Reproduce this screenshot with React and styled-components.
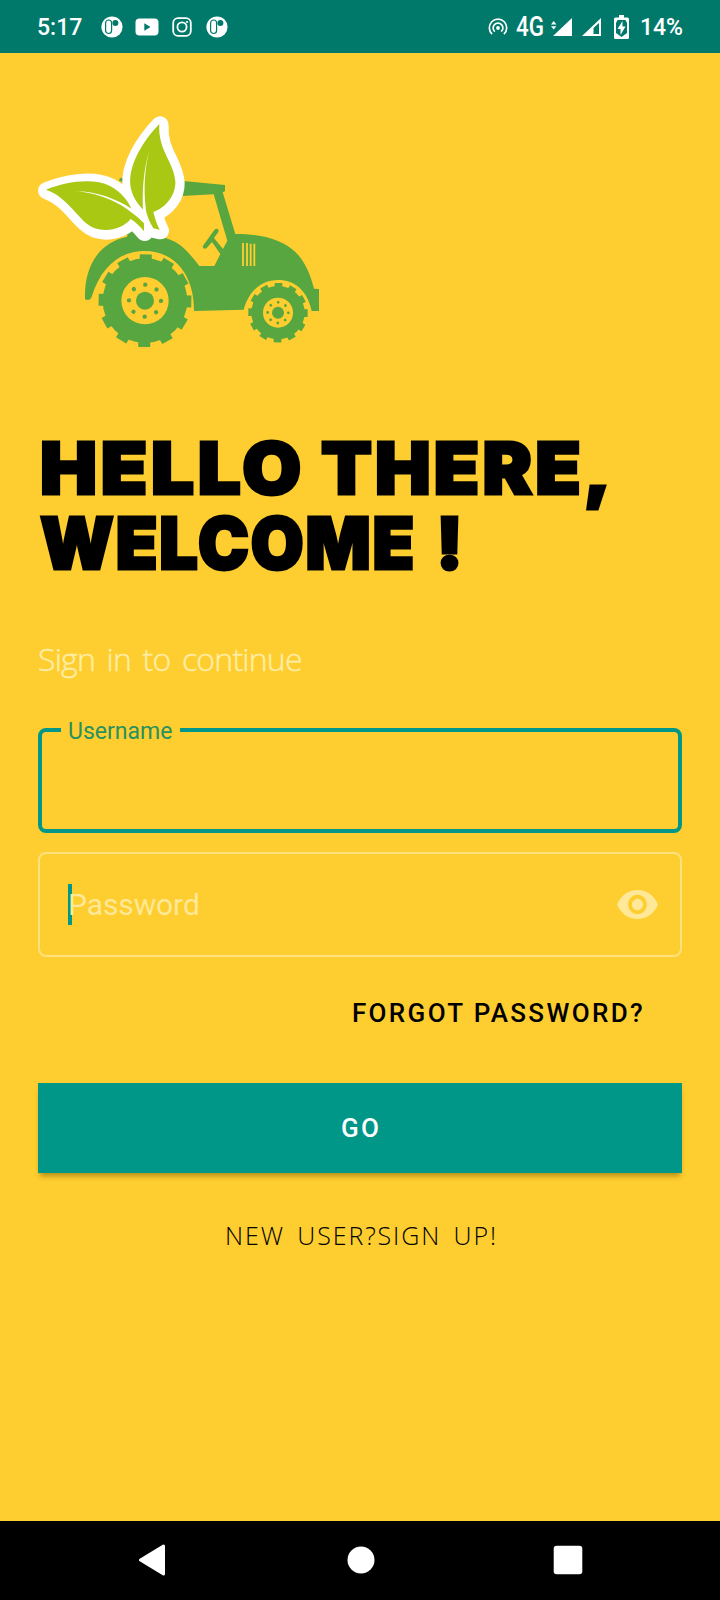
import React from 'react';
import styled, { createGlobalStyle } from 'styled-components';

const GlobalStyle = createGlobalStyle`
  * { box-sizing: border-box; }
  body { margin: 0; background: #fecd2f; font-family: Roboto, sans-serif; }
`;

const Screen = styled.div`
  width: 720px;
  height: 1600px;
  display: flex;
  flex-direction: column;
  background: #fecd2f;
  overflow: hidden;
`;

const StatusBar = styled.header`
  height: 53px;
  flex: none;
  display: flex;
  align-items: center;
  justify-content: space-between;
  padding: 0 37px;
  background: #00796b;
  color: #fff;
  font-size: 23px;
  font-weight: 500;
  line-height: 51px;
`;

const Clock = styled.span`
  width: 64px;
  padding-top: 2px;
`;

const Battery = styled.span`
  padding-top: 2px;
`;

const Network = styled.span`
  width: 35px;
  padding-top: 2px;
  font-size: 27px;
  font-weight: 500;
  span { display: inline-block; transform: scaleX(0.83); transform-origin: left; }
`;

const StatusGroup = styled.div`
  display: flex;
  align-items: center;
  svg { flex: none; display: block; }
`;

const Glyph = styled.svg`
  margin-right: ${(p) => p.$after || 0}px;
`;

const Main = styled.main`
  flex: 1;
  display: flex;
  flex-direction: column;
  padding: 62px 38px 0;
`;

const Logo = styled.svg`
  display: block;
  width: 281px;
  height: 232px;
  flex: none;
  overflow: visible;
`;

const Heading = styled.h1`
  margin: 84px 0 0;
  font-family: Inter, sans-serif;
  font-weight: 900;
  font-size: 71px;
  line-height: 75px;
  color: #000;
  -webkit-text-stroke: 3px #000;
`;

const Line = styled.div`
  display: flex;
  height: 75px;
  padding-left: 2px;
  white-space: nowrap;
`;

const Word = styled.span`
  width: ${(p) => p.$width}px;
  letter-spacing: ${(p) => p.$spacing}px;
  transform: scaleX(${(p) => p.$stretch || 1});
  transform-origin: left;
`;

const Subtitle = styled.p`
  margin: 54px 0 0;
  height: 48px;
  font-family: "Open Sans", sans-serif;
  font-weight: 300;
  font-size: 32px;
  line-height: 48px;
  letter-spacing: -0.8px;
  word-spacing: 4px;
  color: #ffeda8;
  -webkit-text-stroke: 0.4px #ffeda8;
  white-space: nowrap;
`;

const Field = styled.div`
  position: relative;
  height: 105px;
  margin-top: ${(p) => p.$top}px;
  border: ${(p) => (p.$focused ? '4px solid #009688' : '2px solid #ffe17d')};
  border-radius: 8px;
  display: flex;
  align-items: center;
  justify-content: space-between;
  padding: 0 22px 0 28px;
`;

const FloatingLabel = styled.label`
  position: absolute;
  left: 19px;
  top: -14px;
  width: 119px;
  padding-left: 7px;
  background: #fecd2f;
  color: #28915f;
  font-size: 23px;
  line-height: 28px;
`;

const Placeholder = styled.span`
  position: relative;
  font-size: 30px;
  line-height: 42px;
  letter-spacing: -0.1px;
  color: #ffe897;
`;

const Caret = styled.i`
  position: absolute;
  left: 0;
  top: 0;
  width: 4px;
  height: 41px;
  background: #009688;
  z-index: 0;
`;

const PlaceholderText = styled.span`
  position: relative;
  z-index: 1;
`;

const TextButton = styled.button`
  border: 0;
  background: none;
  padding: 0;
  color: #000;
  white-space: nowrap;
`;

const Forgot = styled(TextButton)`
  align-self: flex-end;
  margin: 35px 37px 0 0;
  height: 42px;
  font: 500 26px/42px Roboto, sans-serif;
  letter-spacing: 2.35px;
`;

const GoButton = styled.button`
  flex: none;
  margin-top: 49px;
  height: 90px;
  border: 0;
  padding: 1px 0 0 2px;
  background: #009688;
  color: #fff;
  font: 500 26px/89px Roboto, sans-serif;
  letter-spacing: 2.3px;
  box-shadow: 0 5px 5px -2px rgba(90, 70, 0, 0.45);
`;

const SignUp = styled(TextButton)`
  align-self: center;
  margin: 41px 0 0 3px;
  height: 42px;
  font: 300 25px/42px "Open Sans", sans-serif;
  letter-spacing: 1.9px;
  word-spacing: 4px;
`;

const NavBar = styled.nav`
  height: 79px;
  flex: none;
  background: #000;
  display: flex;
  align-items: center;
  justify-content: space-between;
  padding: 0 137px 1px 138px;
`;

const HomeIcon = styled.svg`
  margin-left: 2px;
`;

const NotificationDot = ({ after }) => (
  <Glyph $after={after} width="22" height="22" viewBox="0 0 22 22">
    <circle cx="11" cy="11" r="10.6" fill="#fff" />
    <rect x="4.6" y="4" width="6" height="13.5" rx="3" fill="#fff" stroke="#00796b" strokeWidth="1.2" />
    <circle cx="14.4" cy="7" r="3" fill="#00796b" />
  </Glyph>
);

const Wheel = ({ cx, cy, base, outer, tooth, hub, core, ring, dot }) => (
  <g transform={`translate(${cx} ${cy})`} fill="#57a63f">
    <circle r={base} />
    {Array.from({ length: 12 }, (_, i) => (
      <rect key={i} x={-tooth / 2} y={-outer} width={tooth} height={outer / 2} transform={`rotate(${i * 30 + 1})`} />
    ))}
    <circle r={hub} fill="#fecd2f" />
    <circle r={core} />
    {Array.from({ length: 8 }, (_, i) => (
      <circle key={i} cy={-ring} r={dot} transform={`rotate(${i * 45 + 1})`} />
    ))}
  </g>
);

const LEAF_LEFT = 'M48 267 C110 242 190 231 240 256 C272 272 294 300 305 326 L306 336 Q325 350 342 368 V392 C330 376 315 363 302 355 C280 382 235 396 195 383 C145 364 120 292 48 267 Z';
const LEAF_RIGHT = 'M388 70 C340 120 296 190 301 252 C304 283 321 307 340 327 L346 318 Q350 350 370 383 L389 387 C379 368 374 350 370 334 C408 321 438 283 436 242 C431 181 383 150 388 70 Z';

const TractorLogo = () => (
  <Logo viewBox="24 45 843 696">
    <g fill="#57a63f">
      <path d="M165 598 C162 500 205 428 292 410 L292 394 L320 380 L395 412 C445 420 475 455 508 498 L553 498 L571 462 L546 426 L530 444 Q522 449 518 441 L520 436 L553 390 Q560 383 566 390 L565 396 L552 414 L579 447 L592 422 L551 283 L455 288 L268 243 L268 236 L275 233 L460 243 L585 255 L585 274 L578 277 L616 402 C700 402 758 420 796 456 C825 484 842 525 852 566 L867 567 L867 633 L845 633 C832 572 795 540 744 540 C690 540 655 578 641 629 L610 630 L492 633 C493 520 430 453 344 453 C270 453 213 500 185 590 Q180 604 165 598 Z" />
    </g>
    <path d="M639 429V498M651 429V498M662 431V498M673 431V498" stroke="#fecd2f" strokeWidth="5.5" />
    <Wheel cx={345} cy={602} base={127} outer={139} tooth={36} hub={71} core={27} ring={48} dot={6.5} />
    <Wheel cx={744} cy={638} base={80} outer={89} tooth={23} hub={45} core={18} ring={31} dot={4.2} />
    <g transform="translate(0 2)">
      <g transform="translate(2 3)" fill="#fff" stroke="#fff" strokeWidth="52" strokeLinejoin="round">
        <path d={LEAF_LEFT} />
        <path d={LEAF_RIGHT} />
      </g>
      <g fill="#a8c814">
        <path d={LEAF_LEFT} />
        <path d={LEAF_RIGHT} />
      </g>
      <path d="M135 272 C200 272 260 295 306 325 L307 338 C270 305 200 275 135 272 Z" fill="#fff" />
      <path d="M359 147 C341 205 336 265 339 330 L347 321 C341 265 343 205 359 147 Z" fill="#fff" />
    </g>
  </Logo>
);

export default function App() {
  return (
    <>
      <GlobalStyle />
      <Screen>
        <StatusBar>
          <StatusGroup>
            <Clock>5:17</Clock>
            <NotificationDot after={12} />
            <Glyph $after={13} width="24" height="18" viewBox="0 0 24 18">
              <rect x="0.5" y="0.5" width="23" height="17" rx="4" fill="#fff" />
              <path d="M9.3 5.2 15.5 9 9.3 12.8Z" fill="#00796b" />
            </Glyph>
            <Glyph $after={14} width="20" height="20" viewBox="0 0 20 20" fill="none" stroke="#fff" strokeWidth="1.8">
              <rect x="1.2" y="1.2" width="17.6" height="17.6" rx="4.8" />
              <circle cx="10" cy="10" r="4.6" />
              <circle cx="15" cy="5" r="1.1" fill="#fff" stroke="none" />
            </Glyph>
            <NotificationDot />
          </StatusGroup>
          <StatusGroup>
            <Glyph $after={8} width="20" height="18" viewBox="0 0 20 18" fill="none" stroke="#fff" strokeWidth="1.7">
              <circle cx="10" cy="10" r="1.9" fill="#fff" stroke="none" />
              <path d="M6.8 13.7A4.9 4.9 0 1 1 13.2 13.7M4.1 16.2A8.7 8.7 0 1 1 15.9 16.2" />
            </Glyph>
            <Network><span>4G</span></Network>
            <Glyph $after={10} width="21" height="18" viewBox="0 0 21 18" fill="#fff">
              <path d="M21 0V18H2ZM0 6.6 2.7 3 5.4 6.6ZM0 8.2 2.7 11.6 5.4 8.2Z" />
            </Glyph>
            <Glyph $after={13} width="19" height="18" viewBox="0 0 19 18" fill="#fff">
              <path fillRule="evenodd" d="M19 0V18H0ZM17 5V16H11.5V10Z" />
            </Glyph>
            <Glyph $after={11} width="15" height="24" viewBox="0 0 15 24">
              <path d="M5 0H10V2.4H13.5Q15 2.4 15 4V22.5Q15 24 13.5 24H1.5Q0 24 0 22.5V4Q0 2.4 1.5 2.4H5Z" fill="#fff" />
              <path d="M3.5 5H11.5L13 8V18L7.5 22 2 18V8Z" fill="#00796b" />
              <path d="M8.5 6V11.5H11.5L6.5 20V14H3.5Z" fill="#fff" />
            </Glyph>
            <Battery>14%</Battery>
          </StatusGroup>
        </StatusBar>
        <Main>
          <TractorLogo />
          <Heading>
            <Line><Word $width={281} $spacing={3.5} $stretch={1.07}>HELLO</Word><Word $spacing={3} $stretch={1.045}>THERE,</Word></Line>
            <Line><Word $width={396} $spacing={2} $stretch={0.96}>WELCOME</Word><Word>!</Word></Line>
          </Heading>
          <Subtitle>Sign in to continue</Subtitle>
          <Field $focused $top={45}>
            <FloatingLabel>Username</FloatingLabel>
          </Field>
          <Field $top={19}>
            <Placeholder><Caret /><PlaceholderText>Password</PlaceholderText></Placeholder>
            <svg width="41" height="29" viewBox="1 4.5 22 15" preserveAspectRatio="none" fill="#ffe897">
              <path d="M12 4.5C7 4.5 2.73 7.61 1 12c1.73 4.39 6 7.5 11 7.5s9.27-3.11 11-7.5c-1.73-4.39-6-7.5-11-7.5zM12 17c-2.76 0-5-2.24-5-5s2.24-5 5-5 5 2.24 5 5-2.24 5-5 5zm0-8c-1.66 0-3 1.34-3 3s1.34 3 3 3 3-1.34 3-3-1.34-3-3-3z" />
            </svg>
          </Field>
          <Forgot>FORGOT PASSWORD?</Forgot>
          <GoButton>GO</GoButton>
          <SignUp>NEW USER?SIGN UP!</SignUp>
        </Main>
        <NavBar>
          <svg width="28" height="32" viewBox="0 0 28 32"><path d="M25.5 2V30L2.5 16Z" fill="#fff" stroke="#fff" strokeWidth="3" strokeLinejoin="round" /></svg>
          <HomeIcon width="28" height="28" viewBox="0 0 28 28"><circle cx="14" cy="14" r="13.5" fill="#fff" /></HomeIcon>
          <svg width="30" height="30" viewBox="0 0 30 30"><rect x="0.7" y="0.7" width="28.6" height="28.6" rx="3" fill="#fff" /></svg>
        </NavBar>
      </Screen>
    </>
  );
}
